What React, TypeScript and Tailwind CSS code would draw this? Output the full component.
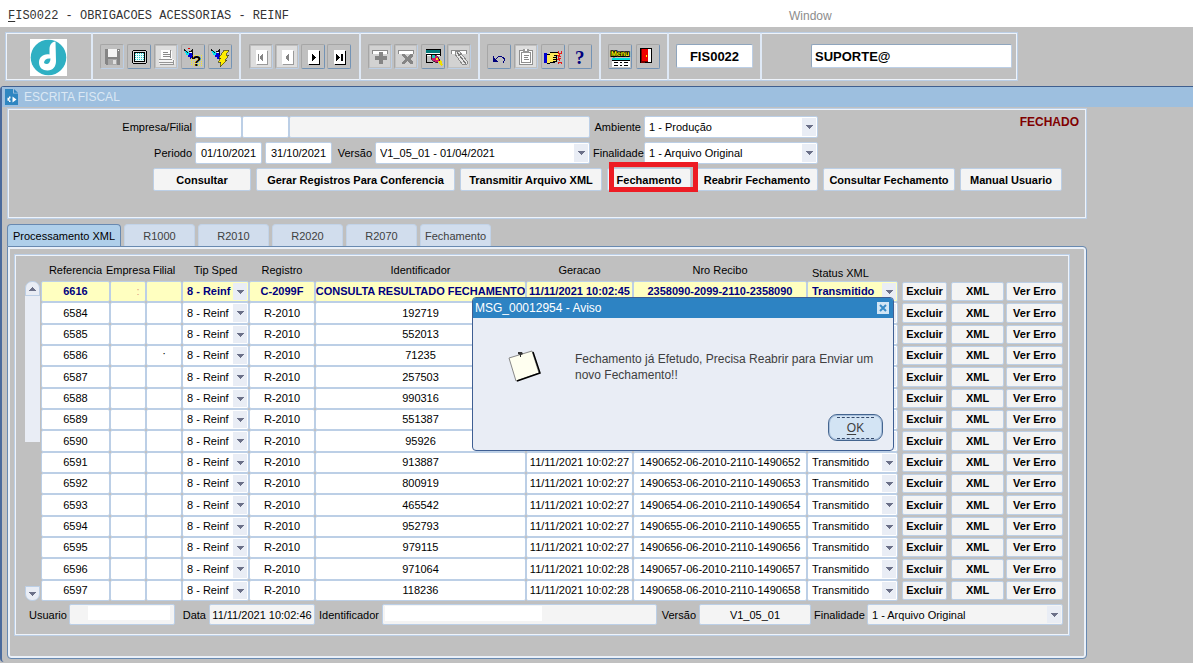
import React from "react";

const BOX = "border border-[#bccfe6] shadow-[inset_0_0_0_1px_#eef3fa]";
const FIELD = "block rounded-[2px] border border-[#bccfe6] text-black outline-none";

type Row = { ref: string; reg: string; id: string; date: string; receipt: string; status: string };

const row = (ref: string, id: string, second = "", receipt = ""): Row => ({
  ref,
  reg: "R-2010",
  id,
  date: second && "11/11/2021 10:02:" + second,
  receipt: receipt && receipt + "-06-2010-2110-" + receipt,
  status: second && "Transmitido",
});

const rows: Row[] = [
  { ref: "6616", reg: "C-2099F", id: "CONSULTA RESULTADO FECHAMENTO", date: "11/11/2021 10:02:45", receipt: "2358090-2099-2110-2358090", status: "Transmitido" },
  row("6584", "192719"),
  row("6585", "552013"),
  row("6586", "71235"),
  row("6587", "257503"),
  row("6588", "990316"),
  row("6589", "551387"),
  row("6590", "95926"),
  row("6591", "913887", "27", "1490652"),
  row("6592", "800919", "27", "1490653"),
  row("6593", "465542", "27", "1490654"),
  row("6594", "952793", "27", "1490655"),
  row("6595", "979115", "27", "1490656"),
  row("6596", "971064", "28", "1490657"),
  row("6597", "118236", "28", "1490658"),
];

function Picker({ id, label, value, className, bg = "bg-white", text = "" }: { id?: string; label?: string; value: string; className: string; bg?: string; text?: string }) {
  return (
    <div className={"relative " + className}>
      <select id={id} aria-label={label} defaultValue={value} className={FIELD + " h-full w-full appearance-none pl-1 " + bg + " " + text}>
        <option value={value}>{value}</option>
      </select>
      <span className="pointer-events-none absolute top-0.5 right-0.5 bottom-0.5 flex w-3.5 items-center justify-center bg-[#e9edf5]">
        <svg width="7" height="4" viewBox="0 0 7 4" shapeRendering="crispEdges"><path d="M0 0h7L3.5 4z" fill="#6b7088" /></svg>
      </span>
    </div>
  );
}

function PushButton({ children, className }: { children: React.ReactNode; className: string }) {
  return (
    <button type="button" className={"block rounded-[2px] border border-[#bccfe6] bg-[#f4f4f4] text-center font-bold whitespace-nowrap text-black " + className}>
      {children}
    </button>
  );
}

function Tool({ label, disabled = false, children }: { label: string; disabled?: boolean; children: React.ReactNode }) {
  return (
    <button
      type="button"
      aria-label={label}
      disabled={disabled}
      className={
        "h-[25px] w-6 shrink-0 rounded-[2px] border border-t-[#a6a6a6] border-l-[#a6a6a6] " +
        (disabled ? "border-r-[#bccfe6] border-b-[#bccfe6]" : "border-r-[#7393b5] border-b-[#7393b5]")
      }
    >
      <svg width="22" height="23" viewBox="1 1 22 23" shapeRendering="crispEdges">{children}</svg>
    </button>
  );
}

function Torch() {
  return (
    <>
      <path d="M4 7h2l3 3v3H7v-2H5V9H4z" fill="#00e5f0" />
      <path d="M8 9h4v3h-1v3H9v-2H7v-2h1z" fill="#0000d8" />
      <path d="M3 5h1v1h1v1h1v1h1v1H6V8H5V7H3zM7 8h1V7h2V6h1V5h1v6h-1V8z" fill="#111" />
      <path d="M9 8h2v1H9z" fill="#fff" />
      <path d="M11 12h1v3h-1z" fill="#111" />
    </>
  );
}

function Page({ off = false, d }: { off?: boolean; d: string }) {
  return (
    <>
      {off && <path d="M2 2h20v21H2z" fill="#dedede" />}
      <path d="M8 7h11v14H8z" fill={off ? "#9a9a9a" : "#000"} />
      <path d="M7 6h11v14H7z" fill="#fff" />
      <path d={d} fill={off ? "#848484" : "#000"} />
    </>
  );
}

function Toolbar() {
  const cell = "flex items-center justify-between border-l-2 border-[#dfe9f6] pb-px";
  return (
    <div className="p-[5px]">
      <div className={"flex h-[49px] w-full max-w-[1013px] " + BOX}>
        <div className="flex w-[85px] shrink-0 items-center justify-center pt-px pr-px">
          <svg width="37" height="37" viewBox="0 0 37 37">
            <path d="M0 0h37v37H0z" fill="#fff" />
            <circle cx="18.5" cy="18.5" r="17.8" fill="#2fb0c3" />
            <path d="M25.500 2.500C21.500 3 19.500 6 19.500 10v5.500c-6.500-1-10.500 3-10.500 8s3.500 8 8.500 8c5.500 0 8.500-4 8.500-9.500z" fill="#fff" />
            <path d="M20.500 19.500c-4-.5-6.500 1.500-6.500 4.500 3 2.500 6.500.5 6.500-4.500z" fill="#2fb0c3" />
          </svg>
        </div>
        <div className={cell + " w-[148px] shrink-0 px-[7px]"}>
          <Tool label="Salvar" disabled>
            <path d="M5 5h15v16H6v-1H5z" fill="#858585" />
            <path d="M8 5h9v8H8z" fill="#f4f4f4" />
            <path d="M8 15h9v6H8z" fill="#a8a8a8" />
            <path d="M13 16h3v4h-3z" fill="#dedede" />
            <path d="M18 6h1v1h-1z" fill="#fff" />
          </Tool>
          <Tool label="Tela">
            <path d="M6 6h13v1h1v12h-1v1H6v-1H5V7h1z" fill="#000" />
            <path d="M6 7h13v12H6z" fill="#d8d8d8" />
            <path d="M7 8h11v10H7z" fill="#000" />
            <path d="M8 9h9v8H8z" fill="#e8ffff" />
            <path d="M8 9.500h9M8 11.500h9M8 13.500h9M8 15.500h9" stroke="#22c3c3" strokeDasharray="1 1" />
          </Tool>
          <Tool label="Imprimir" disabled>
            <path d="M2 2h20v21H2z" fill="#dedede" />
            <path d="M7 6h9l2 2v7H7z" fill="#fff" />
            <path d="M9 8.500h5M9 10.500h7M9 12.500h7M16.500 6v8" stroke="#8a8a8a" fill="none" />
            <path d="M5 15h14l2 2v3H5z" fill="#f4f4f4" />
            <path d="M5 15.500h13M5 18.500h14M6 20.500h13M19.500 16v5" stroke="#959595" fill="none" />
          </Tool>
          <Tool label="Entrar consulta">
            <Torch />
            <path d="M7 4h2v1H7z" fill="#e00000" />
            <path d="M10.500 14v8M12.500 11v11M14.500 11v11M16.500 11v11M18.500 11v11M20.500 11v11" stroke="#f6ee22" strokeDasharray="1 1" />
            <text x="11" y="22" fontSize="15" fontWeight="bold" fill="#000">?</text>
          </Tool>
          <Tool label="Executar consulta">
            <Torch />
            <path d="M16 6h5l-3 5h3l-4 5h2l-7 7 1-5h-3l3-4h-2z" fill="#ffee00" stroke="#3c3c20" strokeWidth=".7" />
          </Tool>
        </div>
        <div className={cell + " w-[120px] shrink-0 px-2"}>
          <Tool label="Primeiro" disabled><Page off d="M9 10h1v7H9zM14 10v7h-1v-1h-1v-1h-1v-3h1v-1h1v-1z" /></Tool>
          <Tool label="Anterior" disabled><Page off d="M14 10v7h-1v-1h-1v-1h-1v-3h1v-1h1v-1z" /></Tool>
          <Tool label="Seguinte"><Page d="M11 10h1v1h1v1h1v1h1v1h-1v1h-1v1h-1v1h-1z" /></Tool>
          <Tool label="Último"><Page d="M9 10h1v1h1v1h1v1h1v1h-1v1h-1v1h-1v1H9zM14 10h2v7h-2z" /></Tool>
        </div>
        <div className={cell + " w-[119px] shrink-0 px-[7px]"}>
          <Tool label="Inserir registro" disabled>
            <path d="M2 2h20v21H2z" fill="#d2d2d2" />
            <path d="M4 6h16v4H4z" fill="#fff" /><path d="M4.500 10V6.500h15V10" fill="none" stroke="#8a8a8a" />
            <path d="M11 8h4v4h4v4h-4v4h-4v-4H7v-4h4z" fill="#858585" />
          </Tool>
          <Tool label="Excluir registro" disabled>
            <path d="M2 2h20v21H2z" fill="#d2d2d2" />
            <path d="M4 6h16v4H4z" fill="#fff" /><path d="M4.500 10V6.500h15V10" fill="none" stroke="#8a8a8a" />
            <path d="M8 10h3l2 3 3-3h3v2l-3 3 3 3v2h-3l-3-3-2 3H8v-2l3-3-3-3z" fill="#858585" />
          </Tool>
          <Tool label="Bloquear registro">
            <path d="M5 6h15v6H5z" fill="#fff" />
            <path d="M5 6h15v3H5z" fill="#007878" />
            <path d="M5 5.500h15M4.500 10h15M19.500 6v6M5.500 11v8M6 18.500h6" stroke="#000" fill="none" />
            <path d="M10 11h4l2 1 3 4-3 3-4-2-2-3z" fill="#d0186c" stroke="#000" strokeWidth=".6" />
            <path d="M11 11h3v3h-3z" fill="#20c8b8" /><path d="M15 14h2v2h-2z" fill="#ffe000" />
            <path d="M17 17l3-1 2 5-2 1z" fill="#f0e000" />
          </Tool>
          <Tool label="Limpar registro" disabled>
            <path d="M2 2h20v21H2z" fill="#d2d2d2" />
            <path d="M4 6h16v4H4z" fill="#fff" /><path d="M4.500 10V6.500h15V10" fill="none" stroke="#8a8a8a" />
            <path d="M8 7h4l8 10v3l-2 1-3-1-7-10z" fill="#e6e6e6" stroke="#8a8a8a" />
            <path d="M11 12l3-2M10 8l9 12" stroke="#777" />
          </Tool>
        </div>
        <div className={cell + " w-[121px] shrink-0 px-[7px]"}>
          <Tool label="Desfazer">
            <path d="M6 12h1v2h1v1h1v1h1v1h1v1H6zM9 14h1v-1h1v-1h4v1h2v1h1v3h-1v2h-1v-2h1v-2h-1v-1h-1v-1h-4v1h-1v1H9z" fill="#00007c" />
          </Tool>
          <Tool label="Lista de valores" disabled>
            <path d="M2 2h20v21H2z" fill="#dedede" />
            <path d="M5.500 6.500h13v14h-13z" fill="#fff" stroke="#8f8f8f" />
            <path d="M7.500 8.500h9v10h-9z" fill="#fff" stroke="#8f8f8f" />
            <path d="M9 5h6v4H9z" fill="#999" /><path d="M11 5h2v2h-2z" fill="#fff" />
            <path d="M10 11.500h5M10 13.500h4M10 15.500h5" stroke="#888" />
          </Tool>
          <Tool label="Editar">
            <path d="M3 9h3v10H3z" fill="#0000d0" />
            <path d="M6 11l3-2h9v2h-4v2h1v5h-5l-2 1H6z" fill="#ffe95a" />
            <path d="M6 10.500h3M9 8.500h9M18.500 9v2M13 11.500h5M12 13.500h3M12 15.500h3M12 17.500h3M15.500 12v6M6 19.500h3M9 18.500h5" stroke="#000" fill="none" />
            <path d="M17.500 7v2h3V7M19 10l-2 4 2 3M17.500 20v-2h3v2M16 11l4 2M16 16l4-2" fill="none" stroke="#e81818" />
          </Tool>
          <Tool label="Ajuda">
            <text x="7" y="20" fontSize="19" fontWeight="bold" fontFamily="Liberation Serif, serif" fill="#00007c">?</text>
          </Tool>
        </div>
        <div className={cell + " w-[68px] shrink-0 px-[7px]"}>
          <Tool label="Menu">
            <text x="3" y="12" fontSize="7" fontWeight="bold" textRendering="geometricPrecision" fill="#ffff00" stroke="#000" strokeWidth="2" paintOrder="stroke">Menu</text>
            <path d="M4 14h18v9H4z" fill="#fff" /><path d="M4 14h18v2H4z" fill="#00dede" />
            <path d="M4 16.500h18M6 18.500h4M12 18.500h2M16 18.500h4M6 21.500h4M12 21.500h2M16 21.500h4" stroke="#000" />
          </Tool>
          <Tool label="Sair">
            <path d="M4.500 4.500h11v14h-11z" fill="#fff" stroke="#000" />
            <path d="M5 5h7v13l-7 1z" fill="#ee0000" /><path d="M5 19V5l1 0v12h6v1z" fill="#700" />
            <path d="M10 11h1v2h-1z" fill="#ff0" />
          </Tool>
        </div>
        <div className="flex w-[93px] shrink-0 items-center border-l-2 border-[#dfe9f6] px-[7px] pb-px">
          <input aria-label="Programa" defaultValue="FIS0022" className={FIELD + " h-6 w-full border-t-[#8fa5bd] border-l-[#8fa5bd] bg-white text-center text-[13px] font-bold"} />
        </div>
        <div className="flex min-w-0 flex-1 items-center border-l-2 border-[#dfe9f6] pr-[5px] pb-px pl-[49px]">
          <input aria-label="Conexão" defaultValue="SUPORTE@" className={FIELD + " h-6 w-full border-t-[#8fa5bd] border-l-[#8fa5bd] bg-white px-[3px] text-[13px] font-bold"} />
        </div>
      </div>
    </div>
  );
}

function Filters() {
  return (
    <form className={"flex flex-col gap-1 pt-[7px] pb-[27px] " + BOX}>
      <div className="flex h-[22px] items-center gap-[3px]">
        <label htmlFor="empresa" className="w-[184px] text-right">Empresa/Filial</label>
        <div className="flex h-full">
          <input id="empresa" className={FIELD + " w-[47px] bg-white px-1"} />
          <input aria-label="Filial" className={FIELD + " w-[47px] bg-white px-1"} />
          <input aria-label="Nome da empresa" readOnly className={FIELD + " w-[301px] bg-[#f4f4f4] px-1"} />
        </div>
        <label htmlFor="ambiente" className="w-12 text-right">Ambiente</label>
        <Picker id="ambiente" value="1 - Produção" className="h-full w-[174px]" />
      </div>
      <div className="flex h-[22px] items-center gap-[3px]">
        <label htmlFor="periodo" className="w-[184px] text-right">Periodo</label>
        <input id="periodo" defaultValue="01/10/2021" className={FIELD + " h-full w-[67px] bg-white text-center"} />
        <input aria-label="Fim do periodo" defaultValue="31/10/2021" className={FIELD + " h-full w-[67px] bg-white text-center"} />
        <label htmlFor="versao" className="w-[37px] text-right">Versão</label>
        <Picker id="versao" value="V1_05_01 - 01/04/2021" className="h-full w-[215px]" />
        <label htmlFor="finalidade" className="w-12 text-right whitespace-nowrap">Finalidade</label>
        <Picker id="finalidade" value="1 - Arquivo Original" className="h-full w-[174px]" />
      </div>
      <div className="flex h-[23px] gap-[5px] pl-[145px]">
        <PushButton className="w-[98px]">Consultar</PushButton>
        <PushButton className="w-[199px]">Gerar Registros Para Conferencia</PushButton>
        <PushButton className="w-[142px]">Transmitir Arquivo XML</PushButton>
        <div className="relative flex">
          <PushButton className="w-[84px]">Fechamento</PushButton>
          <span className="pointer-events-none absolute -top-1.5 -right-[7px] -bottom-px left-0.5 z-10 border-[5px] border-[#ed1c24]" />
        </div>
        <PushButton className="w-[122px]">Reabrir Fechamento</PushButton>
        <PushButton className="w-[132px]">Consultar Fechamento</PushButton>
        <PushButton className="w-[102px]">Manual Usuario</PushButton>
      </div>
    </form>
  );
}

function ScrollBar() {
  return (
    <div className="mt-[26px] flex w-[15px] shrink-0 flex-col justify-between">
      <div>
        <button type="button" aria-label="Subir" className="flex h-[15px] w-full items-center justify-center rounded-t-[7px] border border-[#bccfe6] bg-[#e9edf5]">
          <svg width="7" height="4" viewBox="0 0 7 4" shapeRendering="crispEdges"><path d="M0 4h7L3.500 0z" fill="#6b7088" /></svg>
        </button>
        <div className="h-[146px] bg-[#e9edf5]" />
      </div>
      <button type="button" aria-label="Descer" className="flex h-[15px] w-full items-center justify-center rounded-b-[7px] border border-[#bccfe6] bg-[#e9edf5]">
        <svg width="7" height="4" viewBox="0 0 7 4" shapeRendering="crispEdges"><path d="M0 0h7L3.500 4z" fill="#6b7088" /></svg>
      </button>
    </div>
  );
}

function Cell({ look, children }: { look: string; children?: React.ReactNode }) {
  return (
    <td className="p-0">
      <div className={"flex items-center justify-center overflow-hidden rounded-[2px] border border-[#bccfe6] pb-px whitespace-nowrap " + look}>{children}</div>
    </td>
  );
}

function Grid() {
  return (
    <table className="w-full table-fixed border-separate border-spacing-0">
      <colgroup>
        <col className="w-[69px]" /><col className="w-9" /><col className="w-9" /><col className="w-[67px]" />
        <col className="w-[66px]" /><col /><col className="w-[107px]" /><col className="w-[174px]" />
        <col className="w-[91px]" /><col className="w-[51px]" /><col className="w-14" /><col className="w-[58px]" />
      </colgroup>
      <thead>
        <tr className="h-[26px] align-bottom whitespace-nowrap [&>th]:p-0 [&>th]:pb-1 [&>th]:font-normal">
          <th>Referencia</th>
          <th><span className="-mx-2 block">Empresa</span></th>
          <th>Filial</th>
          <th>Tip Sped</th>
          <th>Registro</th>
          <th>Identificador</th>
          <th>Geracao</th>
          <th>Nro Recibo</th>
          <th className="text-left !pb-px"><span className="block pl-[5px]">Status XML</span></th>
          <td colSpan={3} />
        </tr>
      </thead>
      <tbody>
        {rows.map((r, i) => {
          const current = i === 0;
          const tall = i % 3 === 1;
          const h = tall ? "h-[22px]" : "h-[21px]";
          const hb = tall ? "h-5 w-full" : "h-[19px] w-full";
          const bg = current ? "bg-[#ffffc0] text-[#00007f]" : "bg-white";
          const look = h + " " + bg;
          const text = current ? "font-bold !text-[#00007f] pb-px" : "pb-px";
          return (
            <tr key={r.ref} className={current ? "font-bold" : ""}>
              <Cell look={look}>{r.ref}</Cell>
              <Cell look={look}>{current && <span className="pl-5 font-normal text-[#e0a080]">:</span>}</Cell>
              <Cell look={look}>{r.ref === "6586" && <span className="pb-1">·</span>}</Cell>
              <td className="p-0"><Picker label={"Tip Sped " + r.ref} value="8 - Reinf" className={h} bg={bg} text={text} /></td>
              <Cell look={look}>{r.reg}</Cell>
              <Cell look={look}>{r.id}</Cell>
              <Cell look={look}>{r.date}</Cell>
              <Cell look={look}>{r.receipt}</Cell>
              <td className="p-0"><Picker label={"Status XML " + r.ref} value={r.status} className={h} bg={bg} text={text} /></td>
              <td className="py-px pr-0.5 pl-1"><PushButton className={hb + " pb-px"}>Excluir</PushButton></td>
              <td className="py-px pr-px pl-0.5"><PushButton className={hb + " pb-px"}>XML</PushButton></td>
              <td className="py-px pr-0 pl-px"><PushButton className={hb + " pb-px"}>Ver Erro</PushButton></td>
            </tr>
          );
        })}
      </tbody>
    </table>
  );
}

function Details() {
  return (
    <div className="mt-[3px] flex h-[21px] items-center gap-[3px] pr-1.5 pl-3.5 whitespace-nowrap">
      <label htmlFor="usuario" className="w-[37px] shrink-0 text-right">Usuario</label>
      <div className={FIELD + " h-full w-[106px] shrink-0 bg-[#f4f4f4] pt-px pr-1 pb-1 pl-[18px]"}>
        <input id="usuario" className="block h-full w-full bg-white outline-none" />
      </div>
      <label htmlFor="data" className="w-7 shrink-0 text-right">Data</label>
      <input id="data" readOnly defaultValue="11/11/2021 10:02:46" className={FIELD + " h-full w-[106px] shrink-0 bg-[#f4f4f4] text-center"} />
      <label htmlFor="identificador" className="w-[61px] shrink-0 text-right">Identificador</label>
      <div className={FIELD + " h-full min-w-0 flex-1 bg-[#f4f4f4] pt-px pb-[3px] pl-0.5"}>
        <input id="identificador" className="block h-full w-[157px] bg-white outline-none" />
      </div>
      <label htmlFor="versao-xml" className="w-9 shrink-0 text-right">Versão</label>
      <input id="versao-xml" readOnly defaultValue="V1_05_01" className={FIELD + " h-full w-28 shrink-0 bg-[#f4f4f4] text-center"} />
      <label htmlFor="finalidade-xml" className="w-[50px] shrink-0 text-right">Finalidade</label>
      <Picker id="finalidade-xml" value="1 - Arquivo Original" className="h-full w-[196px] shrink-0" bg="bg-[#f4f4f4]" />
    </div>
  );
}

function Notice() {
  return (
    <div role="dialog" aria-labelledby="aviso" className="absolute top-[297px] left-[472px] z-20 w-[422px] overflow-hidden rounded-[4px] border border-[#3f5f93] bg-[#e9edf5] text-xs">
      <div className="flex h-5 items-center justify-between bg-[#2d83c3] pr-1 pl-0.5 text-white">
        <h2 id="aviso">MSG_00012954 - Aviso</h2>
        <button type="button" aria-label="Fechar" className="h-3 w-3 bg-[#d3e6f5]">
          <svg width="12" height="12" viewBox="0 0 12 12"><path d="M3 3l6 6M9 3l-6 6" stroke="#3a8cc8" strokeWidth="2" /></svg>
        </button>
      </div>
      <div className="flex gap-[34px] pt-8 pl-[35px]">
        <svg width="33" height="33" viewBox="0 0 33 33" className="shrink-0">
          <path d="M1 8l23-7 7 22-23 8z" fill="#fffff0" stroke="#888" />
          <path d="M25 2l7 21-23 8" fill="none" stroke="#000" strokeWidth="1.500" />
          <path d="M10 2h4l1 2-2 1v2h-1V5l-2-1z" fill="#333" />
        </svg>
        <p className="w-[312px] pt-px leading-4 text-[#404040]">Fechamento já Efetudo, Precisa Reabrir para Enviar um novo Fechamento!!</p>
      </div>
      <div className="flex justify-end pt-[31px] pr-2.5 pb-[9px]">
        <button type="button" className="flex h-[27px] w-[55px] flex-col rounded-[9px] border border-[#44658f] bg-[#d3e4f4] px-2 py-0.5 text-[#404040] shadow-[inset_0_0_0_1px_#a9c0dc]">
          <span className="block w-full flex-1 border-y border-dashed border-[#35496a] leading-5">
            <u className="underline-offset-2">O</u>K
          </span>
        </button>
      </div>
    </div>
  );
}

const tabs = ["R1000", "R2010", "R2020", "R2070", "Fechamento"];

export default function App() {
  return (
    <div className="relative min-h-screen overflow-x-hidden bg-[#c0c0c0] font-['Liberation_Sans',Arial,sans-serif] text-[11px] leading-[14px] text-black">
      <nav className="flex h-[27px] items-center bg-white pt-1 pl-2">
        <button type="button" className="w-[781px] text-left font-['Liberation_Mono','Courier_New',monospace] text-xs text-[#333]">
          <u className="underline-offset-2">F</u>IS0022 - OBRIGACOES ACESSORIAS - REINF
        </button>
        <button type="button" className="text-xs text-[#8c8c8c]">Window</button>
      </nav>
      <Toolbar />
      <main className="rounded-tl-[4px] rounded-bl-[4px] border-t border-l-2 border-t-[#3f5f8f] border-l-[#4a6a9c] pb-[3px]">
        <h1 className="flex h-5 items-center bg-[#9dbfdf] pl-[3px] text-xs text-[#dbe8f4]">
          <svg width="13" height="16" viewBox="0 0 13 16" className="mr-1.5">
            <path d="M0 0h8v4.500h5V16H0z" fill="#2e86c1" /><path d="M9 0l4 3.800H9z" fill="#2e86c1" />
            <path d="M5.500 7.500H4v1.200H2.500v3H4V13h1.500M7.500 7.500l4 3-4 3z" fill="#fff" /><path d="M4.500 9.500h2v2h-2z" fill="#2e86c1" />
          </svg>
          ESCRITA FISCAL
        </h1>
        <div className="ml-[5px] w-full max-w-[1080px] pt-px">
          <div className="relative">
            <Filters />
            <strong className="absolute top-1.5 right-2 text-xs text-[#800000]">FECHADO</strong>
          </div>
          <div role="tablist" className="flex gap-[3px] pt-[5px]">
            <button type="button" role="tab" aria-selected="true" className="h-[22px] w-[114px] rounded-t-[4px] border border-b-0 border-[#6889b0] bg-[#afcfea]">Processamento XML</button>
            {tabs.map((t) => (
              <button key={t} type="button" role="tab" aria-selected="false" className="h-[22px] w-[71px] rounded-t-[4px] border border-b-0 border-[#c2d3e8] bg-[#d1dded] text-[#404040]">{t}</button>
            ))}
          </div>
          <section className="rounded-[4px] rounded-tl-none border border-[#6889b0] pt-[7px] pr-4 pb-[22px] pl-1.5 shadow-[inset_0_0_0_2px_#eaf0f8]">
            <div className={"pb-2.5 " + BOX}>
              <div className="flex gap-px pr-1.5 pl-2.5">
                <ScrollBar />
                <Grid />
              </div>
              <Details />
            </div>
          </section>
        </div>
      </main>
      <Notice />
    </div>
  );
}
